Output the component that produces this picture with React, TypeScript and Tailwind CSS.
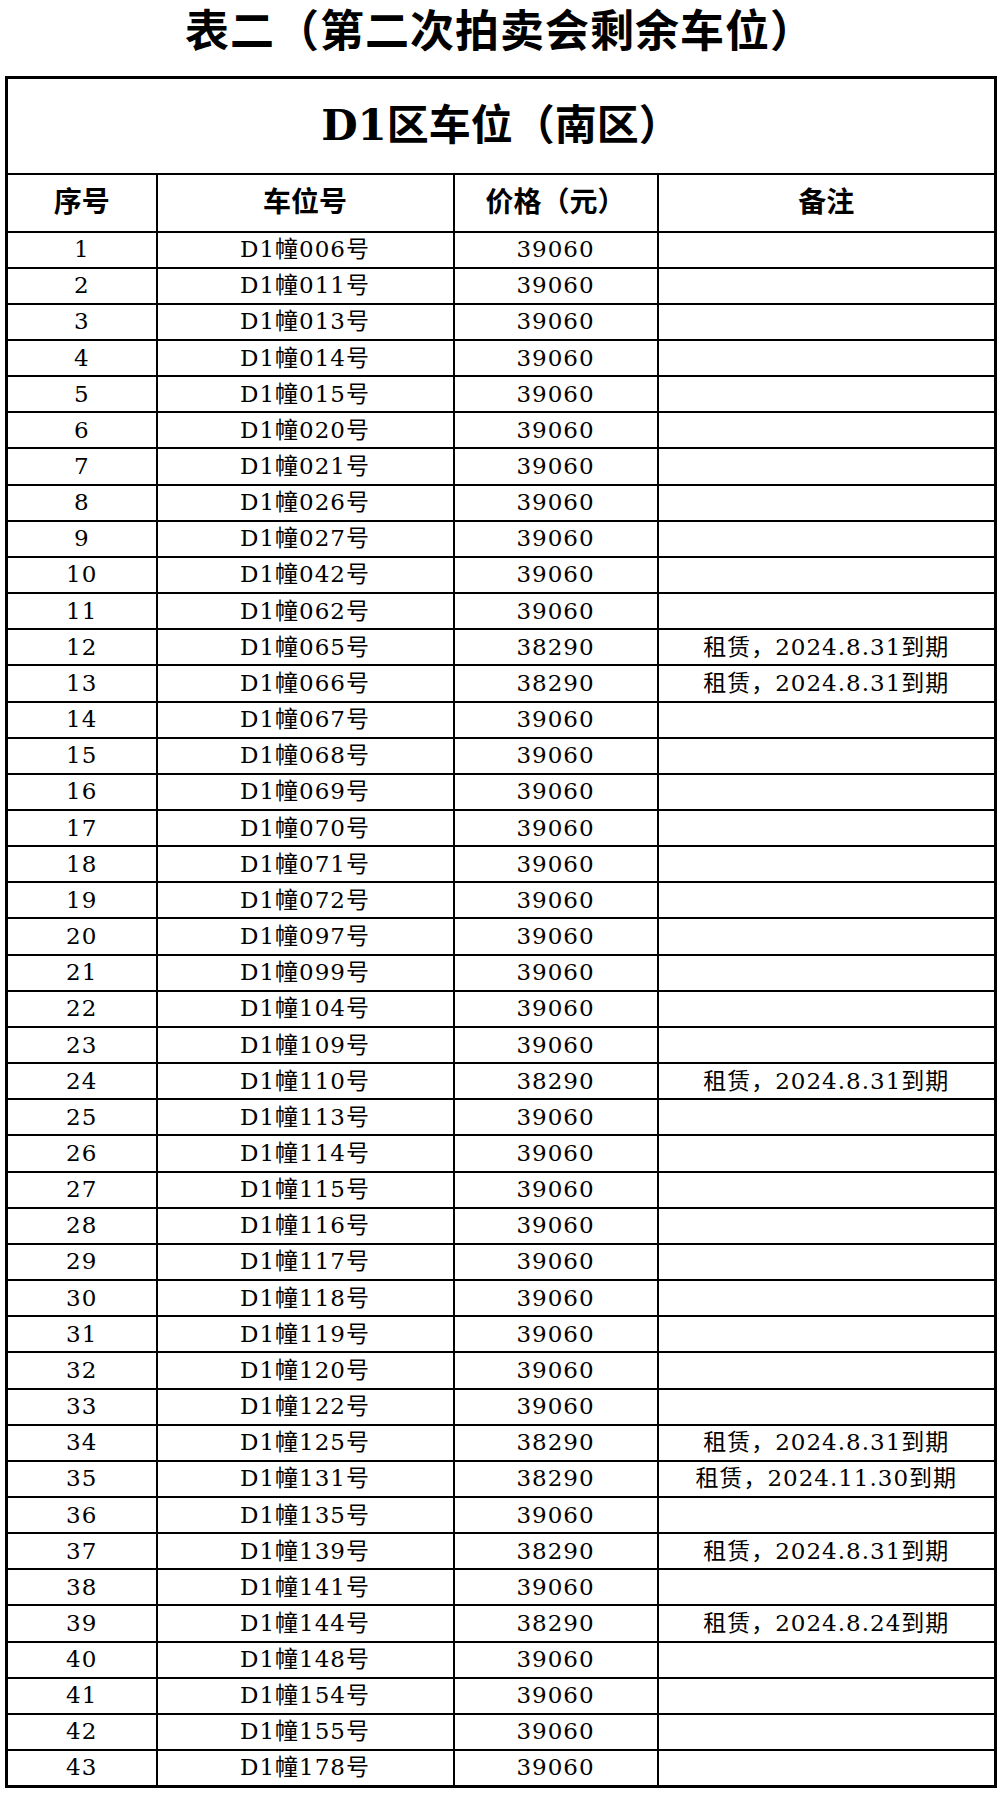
type Lot = {
  no: number;
  code: string;
  price: string;
  note?: string;
};

const lease = (date: string) => `租赁，${date}到期`;

const lots: Lot[] = [
  { no: 1, code: '006', price: '39060' },
  { no: 2, code: '011', price: '39060' },
  { no: 3, code: '013', price: '39060' },
  { no: 4, code: '014', price: '39060' },
  { no: 5, code: '015', price: '39060' },
  { no: 6, code: '020', price: '39060' },
  { no: 7, code: '021', price: '39060' },
  { no: 8, code: '026', price: '39060' },
  { no: 9, code: '027', price: '39060' },
  { no: 10, code: '042', price: '39060' },
  { no: 11, code: '062', price: '39060' },
  { no: 12, code: '065', price: '38290', note: lease('2024.8.31') },
  { no: 13, code: '066', price: '38290', note: lease('2024.8.31') },
  { no: 14, code: '067', price: '39060' },
  { no: 15, code: '068', price: '39060' },
  { no: 16, code: '069', price: '39060' },
  { no: 17, code: '070', price: '39060' },
  { no: 18, code: '071', price: '39060' },
  { no: 19, code: '072', price: '39060' },
  { no: 20, code: '097', price: '39060' },
  { no: 21, code: '099', price: '39060' },
  { no: 22, code: '104', price: '39060' },
  { no: 23, code: '109', price: '39060' },
  { no: 24, code: '110', price: '38290', note: lease('2024.8.31') },
  { no: 25, code: '113', price: '39060' },
  { no: 26, code: '114', price: '39060' },
  { no: 27, code: '115', price: '39060' },
  { no: 28, code: '116', price: '39060' },
  { no: 29, code: '117', price: '39060' },
  { no: 30, code: '118', price: '39060' },
  { no: 31, code: '119', price: '39060' },
  { no: 32, code: '120', price: '39060' },
  { no: 33, code: '122', price: '39060' },
  { no: 34, code: '125', price: '38290', note: lease('2024.8.31') },
  { no: 35, code: '131', price: '38290', note: lease('2024.11.30') },
  { no: 36, code: '135', price: '39060' },
  { no: 37, code: '139', price: '38290', note: lease('2024.8.31') },
  { no: 38, code: '141', price: '39060' },
  { no: 39, code: '144', price: '38290', note: lease('2024.8.24') },
  { no: 40, code: '148', price: '39060' },
  { no: 41, code: '154', price: '39060' },
  { no: 42, code: '155', price: '39060' },
  { no: 43, code: '178', price: '39060' },
];

export default function App() {
  return (
    <div className="min-h-[1795px] bg-white text-black font-['DejaVu_Serif','Noto_Sans_CJK_SC',serif]">
      <h1 className="h-[76px] pt-[6px] text-center text-[44px] leading-[52px] font-bold tracking-[1px]">
        表二（第二次拍卖会剩余车位）
      </h1>

      <table className="ml-[5px] w-[992px] table-fixed border-collapse border-[3px] border-black">
        <colgroup>
          <col className="w-[150px]" />
          <col className="w-[297px]" />
          <col className="w-[204px]" />
          <col />
        </colgroup>
        <thead>
          <tr className="h-[96px]">
            <th
              colSpan={4}
              className="border-2 border-black text-center text-[42px] font-bold leading-none"
            >
              D1区车位（南区）
            </th>
          </tr>
          <tr className="h-[58px]">
            {['序号', '车位号', '价格（元）', '备注'].map((label) => (
              <th
                key={label}
                className="border-2 border-black text-center text-[28px] font-bold leading-none"
              >
                {label}
              </th>
            ))}
          </tr>
        </thead>
        <tbody className="text-[23px] leading-none tracking-[1px]">
          {lots.map((lot) => (
            <tr key={lot.no} className="h-[36.16px]">
              <td className="border-2 border-black p-0 text-center">{lot.no}</td>
              <td className="border-2 border-black p-0 text-center">D1幢{lot.code}号</td>
              <td className="border-2 border-black p-0 text-center">{lot.price}</td>
              <td className="border-2 border-black p-0 text-center">{lot.note}</td>
            </tr>
          ))}
        </tbody>
      </table>
    </div>
  );
}
